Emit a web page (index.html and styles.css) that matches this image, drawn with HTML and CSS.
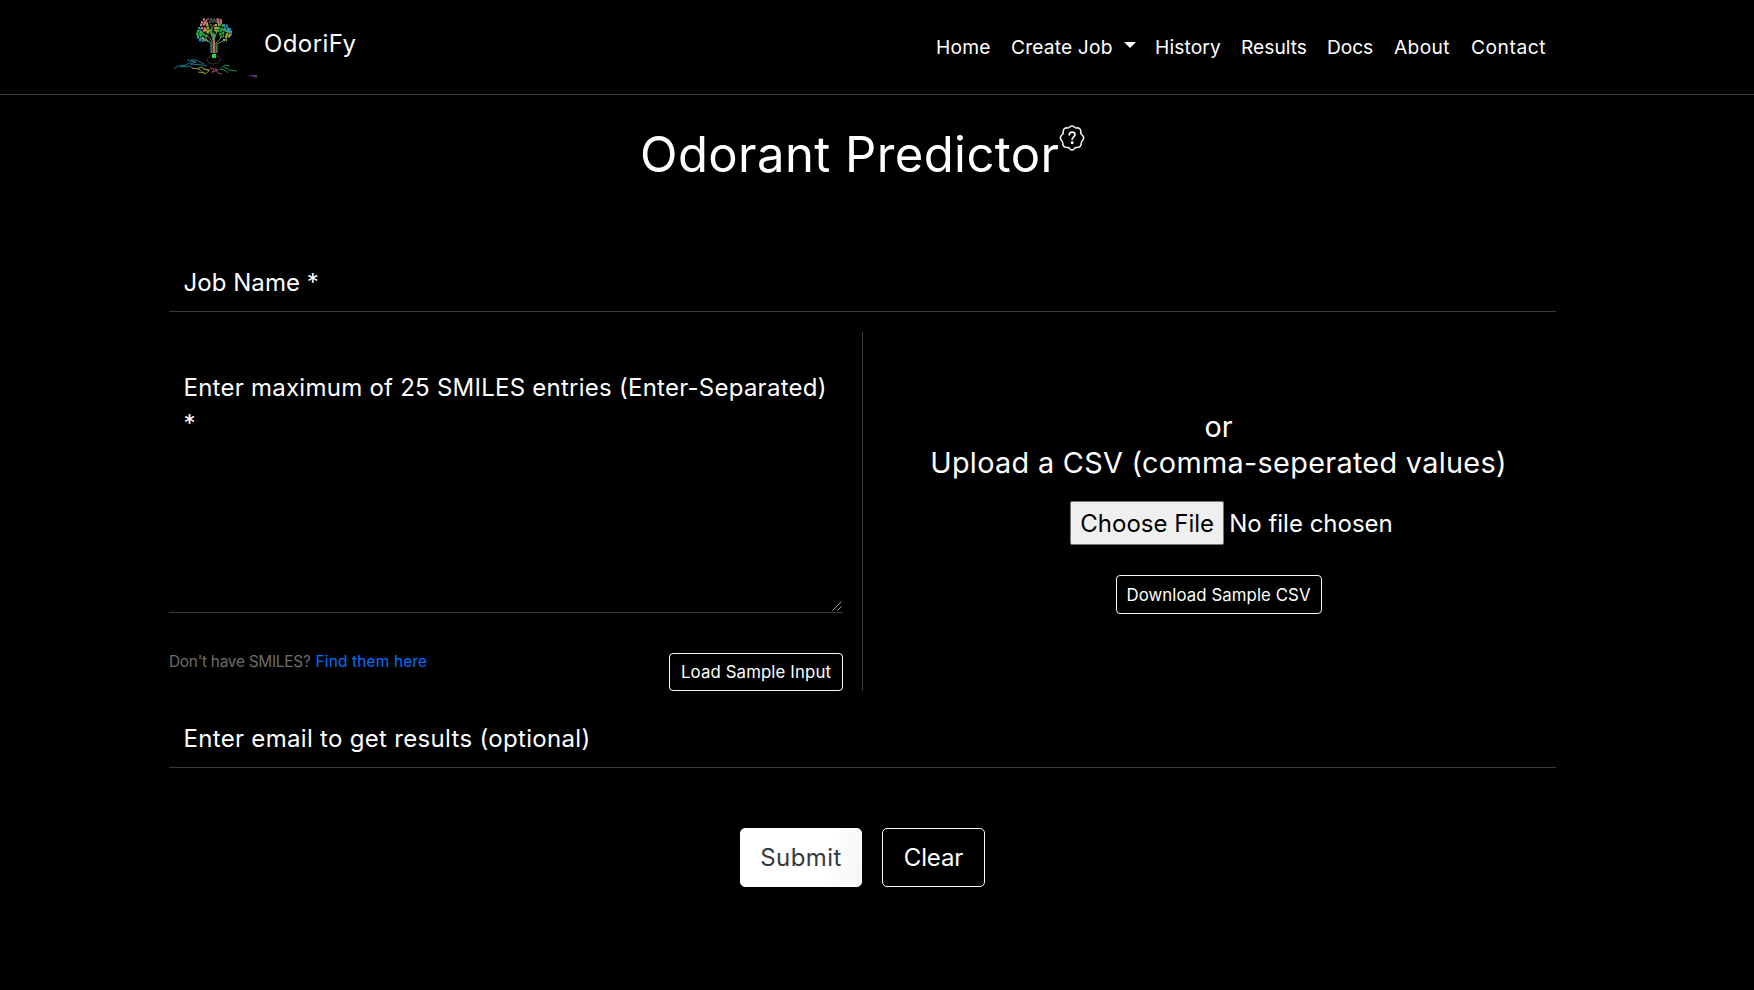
FILE: index.html
```html
<!DOCTYPE html>
<html lang="en">
<head>
<meta charset="utf-8">
<title>OdoriFy</title>
<link rel="stylesheet" href="styles.css">
</head>
<body>
<header class="header">
  <a class="brand">
    <svg class="logo" width="95" height="80" viewBox="0 0 95 80" fill="none">
      <g class="leaves" stroke-width="2.400" stroke-dasharray="2.300 .6">
        <path stroke="#4a4a4a" d="M47 19l10 1M49 22l8-1M50 25l5 1M51 28h3"/>
        <path stroke="#c97a7e" d="M43 19l4 2M41 22l7 1M40 25l8-1M41 28l6 1M43 31l4-1M57 19l5 2M57 22l5 1M58 25h3"/>
        <path stroke="#a5a932" d="M47 24l2 8M45 29l4 5M56 24l-1 7M58 27l-2 5M67 31l5 1M66 34l6 1M65 37l5-1M63 40h4M42 38l6 3"/>
        <path stroke="#2b8fb2" d="M63 25l5 1M64 28l6 1M65 31l6-2M69 28l2 7M37 37l5 2M39 40l6 1M39 27l1 4"/>
        <path stroke="#2cab44" d="M37 31l5 1M36 34l7-1M37 36l6-1M59 24l5 2M58 28l5 1M57 31l8-1M59 34l6-1M60 37l4-1M50 32l4 2M51 35h4M50 30h3M43 34l4 3"/>
      </g>
      <path stroke="#4da5a0" d="M51 53V43l-9-6"/>
      <path stroke="#a87c5c" stroke-width="2" d="M54 53V35"/>
      <path stroke="#81854c" d="M52 53V41l-6-7M56 53V43l5-5"/>
      <path stroke="#4f9f76" d="M57 53V44l9-5M53 40l-2-7M54 40l3-9"/>
      <path stroke="#333" d="M51 55l-4 5 2 3 4 1 5-1 3-3-4-5"/>
      <path fill="#20d83c" d="M52 54h4v4h-4z"/>
      <path stroke="#20778e" d="M14 69l4-3 8-1 5-4 5 1-6 2 12 1 5 1M20 67l9-1 5 3M27 60l9 0 8 4"/>
      <path stroke="#918e2a" d="M32 68l7 1 6 5 4-3-8-4-4 2M38 72l7 1M43 69l7 1"/>
      <path stroke="#a14e58" d="M50 68l4 1-2 4M55 69l3 4 4 1M55 68l3 2-5 2"/>
      <path stroke="#238b51" d="M59 69l6 1 3 3M61 68l4-3 5 1M64 67l5 3 8 1"/>
      <path fill="#5b3069" d="M88 75h9v3z"/>
    </svg>
    <span class="brand-name">OdoriFy</span>
  </a>
  <nav class="nav">
    <a class="n-home">Home</a>
    <a class="n-create">Create Job<i class="caret"></i></a>
    <a class="n-history">History</a>
    <a class="n-results">Results</a>
    <a class="n-docs">Docs</a>
    <a class="n-about">About</a>
    <a class="n-contact">Contact</a>
  </nav>
</header>
<main class="page">
  <h1 class="title"><span>Odorant Predictor</span><svg class="help" width="26" height="26" viewBox="0 0 26 26" fill="none" stroke="#fff" stroke-width="1.500" stroke-linecap="round" stroke-linejoin="round"><path d="M13 1q1.500 0 3 1.600 1.400.6 3 .2 2.300.5 2.700 2.700-.1 2 .5 3.500 1.900 1.500 2.500 3.500-.2 2.300-2 4-.8 1.500-.5 3-.7 2.200-2.700 2.700-2 0-3.500.6Q14.500 25 13 25q-1.500 0-3-2.200-1.500-.6-3.500-.6-2-.5-2.700-2.700.3-1.500-.5-3-1.800-1.700-2-4 .6-2 2.500-3.500.6-1.500.5-3.500Q4.700 3.300 7 2.800q1.600.4 3-.2Q11.500 1 13 1z"/><path d="M10.300 9.800c.2-3.600 5.700-3.500 5.700-.2 0 2.300-2.800 2.200-2.800 4.700" stroke-width="1.700"/><circle cx="13.200" cy="17.800" r=".7"/></svg></h1>
  <div class="field job">Job Name *</div>
  <section class="inputs">
    <div class="smiles">
      <div class="area">Enter maximum of 25 SMILES entries (Enter-Separated)<br>*
        <svg class="grip" width="10" height="10" viewBox="0 0 10 10" stroke="#999"><path d="M.5 9.500l9-9M5.500 9.500l4-4"/></svg>
      </div>
      <div class="under">
        <p class="hint"><span class="ask">Don't have SMILES?</span><a class="link">Find them here</a></p>
        <button class="small load">Load Sample Input</button>
      </div>
    </div>
    <div class="upload">
      <p class="or">or</p>
      <p class="csv">Upload a CSV (comma-seperated values)</p>
      <div class="file"><button class="choose">Choose File</button><span>No file chosen</span></div>
      <button class="small download">Download Sample CSV</button>
    </div>
  </section>
  <div class="field email">Enter email to get results (optional)</div>
  <div class="actions">
    <button class="submit">Submit</button>
    <button class="clear">Clear</button>
  </div>
</main>
</body>
</html>
```

FILE: styles.css
```css
* { box-sizing: border-box; }
body { margin: 0; background: #000; color: #fff; font: 24px/36px Inter, "Liberation Sans", sans-serif; white-space: nowrap; }
p, h1 { margin: 0; font-weight: 400; }
button { font: inherit; color: #fff; background: #000; border: 1px solid #f8f9fa; padding: 0; text-align: center; white-space: nowrap; }
.header { height: 95px; border-bottom: 1px solid #343a40; display: flex; justify-content: space-between; padding: 0 208px 0 160px; }
.brand { display: flex; }
.logo { display: block; overflow: visible; }
.brand-name { margin: 26px 0 0 9px; letter-spacing: .41px; }
.nav { display: grid; grid-template-columns: 75px 144px 86px 86px 67px 77px 76px; align-content: start; margin-right: -1px; padding-top: 32px; font-size: 19.200px; line-height: 30px; }
.n-home { letter-spacing: .2px; }
.n-create { letter-spacing: .16px; display: flex; }
.caret { margin: 10px 0 0 11px; width: 12px; height: 6px; border: 6px solid transparent; border-top-color: #fff; border-bottom: 0; }
.n-history { letter-spacing: .13px; }
.n-results { letter-spacing: 0; }
.n-docs { letter-spacing: -.1px; }
.n-about { letter-spacing: .34px; }
.n-contact { letter-spacing: .54px; }
.page { padding: 30px 198px 0 169px; }
.title { display: flex; padding-left: 471px; font-size: 49px; line-height: 60px; letter-spacing: .42px; }
.help { display: block; margin: 0; }
.field { padding-left: 14.500px; border-bottom: 1px solid #343a40; }
.job { height: 47px; margin-top: 80px; letter-spacing: .05px; }
.inputs { display: grid; grid-template-columns: 694px 693px; height: 359px; margin-top: 20px; }
.smiles { padding-right: 19px; border-right: 1px solid #343a40; }
.area { position: relative; height: 281px; padding: 38px 0 0 14.500px; border-bottom: 1px solid #343a40; line-height: 36px; letter-spacing: .25px; }
.grip { position: absolute; right: 1px; bottom: 1px; }
.under { display: flex; justify-content: space-between; margin-top: 40px; }
.hint { font-size: 15.400px; line-height: 18px; display: flex; gap: 5px; }
.ask { color: #6c6c6c; letter-spacing: -.26px; }
.link { color: #0070ff; letter-spacing: .18px; }
.small { height: 39px; border-radius: 4px; font-size: 16.800px; line-height: 37px; }
.load { width: 174px; height: 38px; letter-spacing: .13px; }
.upload { display: flex; flex-direction: column; align-items: center; padding: 77px 0 0 18px; font-size: 28.800px; line-height: 36px; }
.csv { letter-spacing: .32px; }
.file { display: flex; gap: 5px; margin: 20px 0 29px 26px; font-size: 24px; line-height: 45px; }
.choose { width: 154px; height: 44px; line-height: 43px; color: #000; background: #efefef; border-color: #767676; border-radius: 2px; }
.download { width: 206px; line-height: 38px; letter-spacing: .08px; }
.email { height: 50px; margin-top: 27px; padding-top: 3px; letter-spacing: .31px; }
.actions { display: flex; gap: 20px; margin: 60px 0 0 571px; }
.submit, .clear { height: 59px; border-radius: 5px; }
.submit { width: 122px; color: #343a40; background: linear-gradient(100deg, #fff 70%, #f5f5f5); border-color: #fff; letter-spacing: .4px; }
.clear { width: 103px; letter-spacing: -.1px; }
```
